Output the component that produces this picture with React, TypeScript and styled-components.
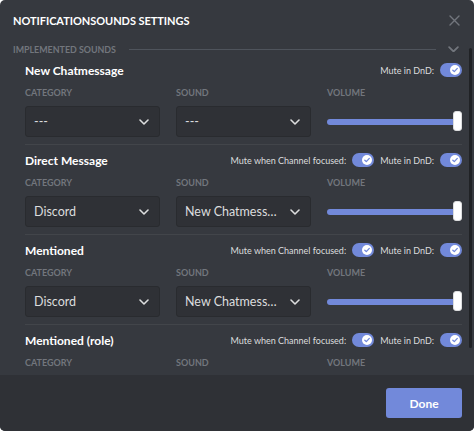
import styled, { createGlobalStyle } from "styled-components";

const GlobalStyle = createGlobalStyle`
  html, body {
    margin: 0;
    padding: 0;
    background: #ffffff;
  }
  body {
    font-family: "Lato", "Open Sans", sans-serif;
  }
`;

type Sound = {
  name: string;
  category: string;
  sound: string;
  channelMute: boolean;
};

const sounds: Sound[] = [
  { name: "New Chatmessage", category: "---", sound: "---", channelMute: false },
  { name: "Direct Message", category: "Discord", sound: "New Chatmessage", channelMute: true },
  { name: "Mentioned", category: "Discord", sound: "New Chatmessage", channelMute: true },
  { name: "Mentioned (role)", category: "Discord", sound: "New Chatmessage", channelMute: true },
];

function Chevron({ size = 10 }: { size?: number }) {
  return (
    <svg width={size} height={size * 0.6} viewBox="0 0 10 6" fill="none">
      <path d="M1 1l4 4 4-4" stroke="currentColor" strokeWidth="1.6" strokeLinecap="round" strokeLinejoin="round" />
    </svg>
  );
}

function Toggle() {
  return (
    <Switch>
      <Knob>
        <svg width="8" height="8" viewBox="0 0 8 8" fill="none">
          <path d="M1.8 4.2l1.5 1.4 3-3.2" stroke="#7289da" strokeWidth="1.3" strokeLinecap="round" strokeLinejoin="round" />
        </svg>
      </Knob>
    </Switch>
  );
}

function SoundSection({ item }: { item: Sound }) {
  return (
    <Section>
      <TitleRow>
        <Title>{item.name}</Title>
        <Mutes>
          {item.channelMute && (
            <>
              <MuteLabel>Mute when Channel focused:</MuteLabel>
              <Toggle />
            </>
          )}
          <MuteLabel>Mute in DnD:</MuteLabel>
          <Toggle />
        </Mutes>
      </TitleRow>
      <Fields>
        <Field>
          <FieldLabel>Category</FieldLabel>
          <Select>
            <SelectText>{item.category}</SelectText>
            <Chevron />
          </Select>
        </Field>
        <Field>
          <FieldLabel>Sound</FieldLabel>
          <Select>
            <SelectText>{item.sound}</SelectText>
            <Chevron />
          </Select>
        </Field>
        <Field>
          <FieldLabel>Volume</FieldLabel>
          <Slider>
            <Track />
            <Grabber />
          </Slider>
        </Field>
      </Fields>
      <Divider />
    </Section>
  );
}

export default function App() {
  return (
    <>
      <GlobalStyle />
      <Modal>
        <Header>
          <HeaderTitle>NotificationSounds Settings</HeaderTitle>
          <Close>
            <svg width="11" height="11" viewBox="0 0 11 11">
              <path d="M1 1l9 9M10 1l-9 9" stroke="currentColor" strokeWidth="1.4" strokeLinecap="round" />
            </svg>
          </Close>
        </Header>
        <Body>
          <Content>
            <GroupHeader>
              <GroupTitle>Implemented Sounds</GroupTitle>
              <GroupLine />
              <GroupChevron>
                <Chevron size={11} />
              </GroupChevron>
            </GroupHeader>
            <Sections>
              {sounds.map((s) => (
                <SoundSection key={s.name} item={s} />
              ))}
            </Sections>
          </Content>
          <Rail>
            <Thumb />
          </Rail>
        </Body>
        <Footer>
          <DoneButton>Done</DoneButton>
        </Footer>
      </Modal>
    </>
  );
}

const Modal = styled.div`
  width: 474px;
  height: 431px;
  display: flex;
  flex-direction: column;
  background: #36393f;
  border-radius: 5px;
  overflow: hidden;
`;

const Header = styled.div`
  height: 40px;
  flex-shrink: 0;
  display: flex;
  align-items: center;
  justify-content: space-between;
  padding: 0 14px 0 13px;
`;

const HeaderTitle = styled.h2`
  margin: 0;
  font-size: 11px;
  letter-spacing: -0.05px;
  font-weight: 700;
  text-transform: uppercase;
  color: #ffffff;
`;

const Close = styled.div`
  color: #72767d;
  display: flex;
`;

const Body = styled.div`
  flex: 1;
  min-height: 0;
  display: flex;
`;

const Content = styled.div`
  flex: 1;
  min-width: 0;
  overflow: hidden;
  padding: 3px 4px 0 13px;
`;

const Rail = styled.div`
  width: 8px;
  flex-shrink: 0;
  display: flex;
  justify-content: center;
  padding-top: 8px;
`;

const Thumb = styled.div`
  width: 3px;
  height: 300px;
  border-radius: 2px;
  background: #202225;
`;

const GroupHeader = styled.div`
  height: 12px;
  display: flex;
  align-items: center;
  padding-right: 3px;
`;

const GroupTitle = styled.span`
  font-size: 8.9px;
  font-weight: 700;
  text-transform: uppercase;
  color: #72767d;
`;

const GroupLine = styled.div`
  flex: 1;
  height: 1px;
  background: #4f545c;
  margin: 0 12px 0 13px;
`;

const GroupChevron = styled.div`
  color: #72767d;
  display: flex;
`;

const Sections = styled.div`
  margin: 6px 0 0 12px;
`;

const Section = styled.div`
  padding-bottom: 6px;
`;

const TitleRow = styled.div`
  height: 18px;
  display: flex;
  align-items: center;
  justify-content: space-between;
`;

const Title = styled.span`
  font-size: 12px;
  font-weight: 700;
  color: #ffffff;
`;

const Mutes = styled.div`
  display: flex;
  align-items: center;
  gap: 6px;
`;

const MuteLabel = styled.span`
  font-size: 9px;
  color: #dcddde;
`;

const Switch = styled.div`
  width: 22px;
  height: 14px;
  border-radius: 7px;
  background: #7289da;
  display: flex;
  align-items: center;
  justify-content: flex-end;
  padding: 0 2px;
  box-sizing: border-box;
`;

const Knob = styled.div`
  width: 10px;
  height: 10px;
  border-radius: 50%;
  background: #ffffff;
  display: flex;
  align-items: center;
  justify-content: center;
`;

const Fields = styled.div`
  display: grid;
  grid-template-columns: repeat(3, 1fr);
  column-gap: 16px;
  margin-top: 8px;
`;

const Field = styled.div`
  display: flex;
  flex-direction: column;
  gap: 7px;
  min-width: 0;
`;

const FieldLabel = styled.span`
  height: 12px;
  line-height: 12px;
  font-size: 9px;
  font-weight: 700;
  text-transform: uppercase;
  color: #72767d;
`;

const Select = styled.div`
  height: 31px;
  box-sizing: border-box;
  display: flex;
  align-items: center;
  gap: 9px;
  padding: 0 10px 0 8px;
  background: #2f3136;
  border: 1px solid #292b2f;
  border-radius: 3px;
  color: #dcddde;
`;

const SelectText = styled.span`
  flex: 1;
  min-width: 0;
  font-size: 12.5px;
  white-space: nowrap;
  overflow: hidden;
  text-overflow: ellipsis;
`;

const Slider = styled.div`
  height: 31px;
  display: flex;
  align-items: center;
  position: relative;
`;

const Track = styled.div`
  flex: 1;
  height: 6px;
  border-radius: 3px;
  background: #7289da;
`;

const Grabber = styled.div`
  position: absolute;
  right: 0;
  top: 5px;
  width: 9px;
  height: 20px;
  border-radius: 3px;
  background: #ffffff;
  border: 1px solid #dcddde;
  box-sizing: border-box;
`;

const Divider = styled.div`
  height: 1px;
  background: #42454a;
  margin-top: 7px;
`;

const Footer = styled.div`
  height: 56px;
  flex-shrink: 0;
  display: flex;
  align-items: center;
  justify-content: flex-end;
  padding: 0 12px;
  background: #2f3136;
`;

const DoneButton = styled.button`
  width: 76px;
  height: 30px;
  border: none;
  border-radius: 3px;
  background: #7289da;
  color: #ffffff;
  font-family: "Lato", "Open Sans", sans-serif;
  font-size: 12px;
  font-weight: 700;
`;
